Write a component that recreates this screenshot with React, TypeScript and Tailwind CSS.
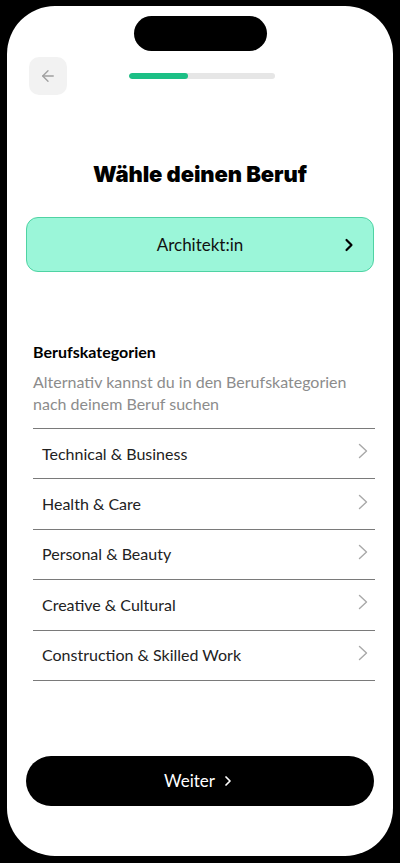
import { ArrowLeft, ChevronRight } from "lucide-react";

const categories = [
  "Technical & Business",
  "Health & Care",
  "Personal & Beauty",
  "Creative & Cultural",
  "Construction & Skilled Work",
];

function ThinChevron(): React.ReactElement {
  return (
    <svg width="10" height="16" viewBox="0 0 10 16" fill="none" className="-mt-[5px] text-[#a8a8a8]">
      <path d="M1.5 1.5 L8.5 8 L1.5 14.5" stroke="currentColor" strokeWidth="1.4" strokeLinecap="round" strokeLinejoin="round" />
    </svg>
  );
}

export default function App(): React.ReactElement {
  return (
    <div className="h-[863px] w-[400px] bg-black px-[7px] pt-[6px] font-['Lato','Open_Sans',sans-serif]">
      <div className="flex h-[850px] flex-col rounded-[48px] bg-white pb-[50px]">
        {/* dynamic island */}
        <div className="mx-auto mt-[10px] h-[35px] w-[133px] rounded-full bg-black" />

        {/* header */}
        <div className="mt-[6px] flex items-center pl-[22px]">
          <button
            className="flex h-[38px] w-[38px] items-center justify-center rounded-[10px] bg-[#f2f2f2] text-[#a0a0a0]"
            aria-label="Zurück"
          >
            <ArrowLeft className="h-[18px] w-[18px]" strokeWidth={1.8} />
          </button>
          <div className="ml-[62px] h-[6px] w-[146px] overflow-hidden rounded-full bg-[#e6e6e6]">
            <div className="h-full w-[59px] rounded-full bg-[#1cbf85]" />
          </div>
        </div>

        <h1 className="mt-[65px] text-center font-['Inter',sans-serif] text-[22px] font-black leading-[28px] tracking-[-0.1px] text-black">
          Wähle deinen Beruf
        </h1>

        <button className="relative mx-[19px] mt-[29px] flex h-[55px] items-center justify-center rounded-[12px] border border-[#4fd3a3] bg-[#9bf6d9] text-[17px] text-[#111]">
          <span>Architekt:in</span>
          <ChevronRight className="absolute right-[14px] h-[20px] w-[20px] text-black" strokeWidth={2.6} />
        </button>

        <div className="mx-[26px] mt-[69px]">
          <h2 className="text-[16px] font-bold leading-[22px] text-black">Berufskategorien</h2>
          <p className="mt-[8px] text-[16px] leading-[22px] text-[#8c8c8c]">
            Alternativ kannst du in den Berufskategorien nach deinem Beruf suchen
          </p>
        </div>

        <ul className="ml-[26px] mr-[18px] mt-[13px] border-t border-[#7a7a7a]">
          {categories.map((c) => (
            <li
              key={c}
              className="flex h-[50.4px] items-center justify-between border-b border-[#7a7a7a] pl-[9px] pr-[7px]"
            >
              <span className="text-[16px] text-[#222]">{c}</span>
              <ThinChevron />
            </li>
          ))}
        </ul>

        <button className="mx-[19px] mt-auto flex h-[50px] items-center justify-center gap-[5px] rounded-full bg-black text-[17px] text-white">
          <span>Weiter</span>
          <ChevronRight className="h-[16px] w-[16px]" strokeWidth={2.6} />
        </button>
      </div>
    </div>
  );
}
